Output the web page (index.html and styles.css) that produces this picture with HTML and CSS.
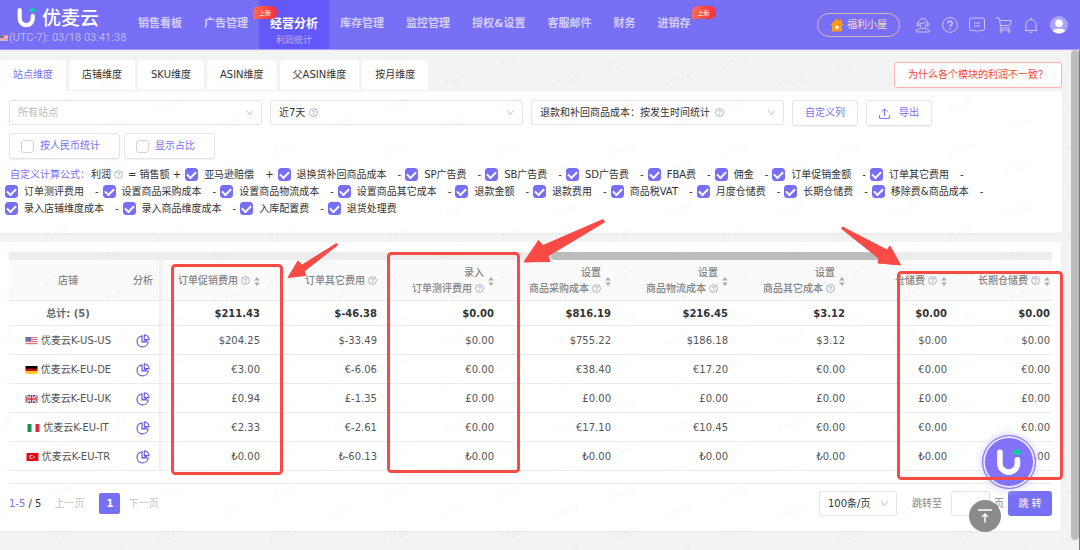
FILE: index.html
```html
<!DOCTYPE html>
<html lang="zh-CN">
<head>
  <meta charset="UTF-8">
  <title>利润统计 | 优麦云</title>
  <link rel="stylesheet" href="styles.css">
</head>
<body>
  <svg class="sprite" aria-hidden="true">
    <symbol id="help" viewBox="0 0 16 16"><circle cx="8" cy="8" r="7" fill="none" stroke="currentColor" stroke-width="1.3"/><path d="M5.8 6.4a2.2 2.2 0 1 1 3.3 1.9c-.8.5-1.1.8-1.1 1.6" fill="none" stroke="currentColor" stroke-width="1.4"/><circle cx="8" cy="11.8" r=".9" fill="currentColor"/></symbol>
    <symbol id="sort" viewBox="0 0 6 10"><path d="M3 0l3 4H0zM3 10l3-4H0z" fill="currentColor"/></symbol>
    <symbol id="down" viewBox="0 0 10 10"><path d="M1.5 2.5L5 7.5l3.500-5" fill="none" stroke="currentColor"/></symbol>
    <symbol id="pie" viewBox="0 0 14 14"><path d="M6 1.800A5.600 5.600 0 1 0 12.200 8H6z M8.300 5.700V.900a4.800 4.800 0 0 1 4.800 4.800z M6 8l5-1.500" fill="none" stroke="currentColor" stroke-width="1.2" stroke-linejoin="round"/></symbol>
    <symbol id="mark" viewBox="0 0 18 20"><path d="M2.500 3v8a6 6 0 0 0 12.500 0V8.500" fill="none" stroke="#fff" stroke-width="4" stroke-linecap="round"/><path d="M12 4.600a2 2 0 0 1 .6-3 2.600 2.600 0 0 1 4.200.6 1.500 1.500 0 0 1 .2 2.400z" fill="#0ccfa5"/></symbol>
    <symbol id="us" viewBox="0 0 12 8"><path fill="#f3dfe2" d="M0 0h12v8H0z"/><path stroke="#dd7883" d="M0 .5h12M0 2.500h12M0 4.500h12M0 6.500h12"/><path fill="#6d6da8" d="M0 0h5.500v4H0z"/></symbol>
    <symbol id="de" viewBox="0 0 12 8"><path d="M0 0h12v3H0z"/><path fill="#d80f0f" d="M0 2.700h12v2.700H0z"/><path fill="#ffce1a" d="M0 5.300h12V8H0z"/></symbol>
    <symbol id="uk" viewBox="0 0 12 8"><path fill="#3d4a94" d="M0 0h12v8H0z"/><path stroke="#fff" stroke-width="1.600" d="M0 0l12 8M12 0L0 8"/><path stroke="#d2303f" stroke-width=".6" d="M0 0l12 8M12 0L0 8"/><path stroke="#fff" stroke-width="2.600" d="M6 0v8M0 4h12"/><path stroke="#d2303f" stroke-width="1.500" d="M6 0v8M0 4h12"/></symbol>
    <symbol id="it" viewBox="0 0 12 8"><path fill="#fff" d="M0 0h12v8H0z"/><path fill="#1b9150" d="M0 0h4v8H0z"/><path fill="#d02b37" d="M8 0h4v8H8z"/></symbol>
    <symbol id="tr" viewBox="0 0 12 8"><path fill="#e30a17" d="M0 0h12v8H0z"/><circle cx="4.800" cy="4" r="2" fill="#fff"/><circle cx="5.400" cy="4" r="1.600" fill="#e30a17"/><circle cx="7.600" cy="4" r=".7" fill="#fff"/></symbol>
  </svg>

  <header class="header">
    <div class="brand">
      <div class="logo"><svg class="logo-mark"><use href="#mark"/></svg><span>优麦云</span></div>
      <div class="clock"><svg class="clock-flag"><use href="#us"/></svg>(UTC-7): 03/18 03:41:38</div>
    </div>
    <nav class="nav">
      <a href="#">销售看板</a>
      <a href="#">广告管理</a>
      <a href="#" class="active">经营分析<span class="badge badge-left">上新</span><small>利润统计</small></a>
      <a href="#">库存管理</a>
      <a href="#">监控管理</a>
      <a href="#">授权&amp;设置</a>
      <a href="#">客服邮件</a>
      <a href="#">财务</a>
      <a href="#">进销存<span class="badge badge-right">上新</span></a>
    </nav>
    <div class="tools">
      <button class="welfare"><svg width="14" height="14" viewBox="0 0 14 14"><path d="M7 .5L0 7h2v6.500h10V7h2l-2.200-2V1.500h-2V3.200z" fill="#ff9b12"/><path d="M5.500 8h3v3h-3z" fill="#fff"/></svg>福利小屋</button>
      <button class="tool" aria-label="客服"><svg viewBox="0 0 16 16"><path d="M3.500 9.500V6a4.500 4.500 0 0 1 9 0v3.500M3.500 5.500a1.500 1.500 0 0 0-1.500 1.500v.5A1.500 1.500 0 0 0 3.500 9M12.500 5.500A1.500 1.500 0 0 1 14 7v.5A1.500 1.500 0 0 1 12.500 9M5 6.500c2 0 4-.5 5-1.500.3 1 .7 1.500 1 1.500M5 7c0 3 1.500 4.500 3 4.500S11 10 11 7M6 11.500L1.500 13v2h13v-2L10 11.500"/></svg></button>
      <button class="tool" aria-label="帮助"><svg viewBox="0 0 16 16"><circle cx="8" cy="8" r="7.400"/><path d="M5.800 6.300a2.200 2.200 0 1 1 3.400 1.900c-.9.600-1.200.9-1.200 1.700M8 11v1.600" stroke-width="1.600"/></svg></button>
      <button class="tool" aria-label="消息"><svg viewBox="0 0 16 16"><path d="M2.500 1h11a2 2 0 0 1 2 2v8.500a2 2 0 0 1-2 2H10l-2 1.800-2-1.800H2.500a2 2 0 0 1-2-2V3a2 2 0 0 1 2-2zM5 6h6M5 9h6"/></svg></button>
      <button class="tool" aria-label="购物车"><svg viewBox="0 0 16 16"><path d="M0 1h3l2 10h9M3.500 3.500h11.800L14 8.500H4.500M5 11l-1 2h10"/><circle cx="5" cy="14.500" r="1"/><circle cx="13" cy="14.500" r="1"/></svg></button>
      <button class="tool" aria-label="通知"><svg viewBox="0 0 16 16"><path d="M1.500 13.500h13M3 13.500V7.500a5 5 0 0 1 10 0v6M8 2.500V.5M6.500 15.300h3"/></svg></button>
      <button class="avatar" aria-label="账户"><svg viewBox="0 0 18 18"><circle cx="9" cy="9" r="9" fill="#aaa5f8"/><circle cx="9" cy="7.300" r="3.800" fill="#fff"/><path d="M2.800 15c2-3.300 10.400-3.300 12.400 0A9 9 0 0 1 2.800 15z" fill="#fff"/></svg></button>
    </div>
  </header>

  <main class="page">
    <div class="tabbar">
      <nav class="tabs">
        <a href="#" class="current">站点维度</a>
        <a href="#">店铺维度</a>
        <a href="#">SKU维度</a>
        <a href="#">ASIN维度</a>
        <a href="#">父ASIN维度</a>
        <a href="#">按月维度</a>
      </nav>
      <button class="why">为什么各个模块的利润不一致？</button>
    </div>

    <section class="panel filters">
      <div class="row pickers">
        <div class="picker empty">
          <select aria-label="站点"><option>所有站点</option></select>
          <svg class="arrow"><use href="#down"/></svg>
        </div>
        <div class="picker">
          <select aria-label="时间"><option>近7天</option></select>
          <svg class="help help-days"><use href="#help"/></svg>
          <svg class="arrow"><use href="#down"/></svg>
        </div>
        <div class="picker">
          <select aria-label="统计方式"><option>退款和补回商品成本：按发生时间统计</option></select>
          <svg class="help help-cost"><use href="#help"/></svg>
          <svg class="arrow"><use href="#down"/></svg>
        </div>
        <button class="btn">自定义列</button>
        <button class="btn"><svg width="11" height="11" viewBox="0 0 11 11"><path d="M.6 7v3.400h9.800V7M5.500 8V1M2.800 3.600L5.500.9l2.700 2.700" fill="none" stroke="currentColor"/></svg>导出</button>
      </div>
      <div class="row toggles">
        <label class="btn"><input type="checkbox">按人民币统计</label>
        <label class="btn"><input type="checkbox">显示占比</label>
      </div>
      <div class="formula">
        <div class="line first">
          <a href="#">自定义计算公式：</a><span class="profit">利润<svg class="help"><use href="#help"/></svg>= 销售额 +</span>
          <label><input type="checkbox" checked>亚马逊赔偿</label><i>+</i>
          <label><input type="checkbox" checked>退换货补回商品成本</label><i>-</i>
          <label><input type="checkbox" checked>SP广告费</label><i>-</i>
          <label><input type="checkbox" checked>SB广告费</label><i>-</i>
          <label><input type="checkbox" checked>SD广告费</label><i>-</i>
          <label><input type="checkbox" checked>FBA费</label><i>-</i>
          <label><input type="checkbox" checked>佣金</label><i>-</i>
          <label><input type="checkbox" checked>订单促销金额</label><i>-</i>
          <label><input type="checkbox" checked>订单其它费用</label><i>-</i>
        </div>
        <div class="line">
          <label><input type="checkbox" checked>订单测评费用</label><i>-</i>
          <label><input type="checkbox" checked>设置商品采购成本</label><i>-</i>
          <label><input type="checkbox" checked>设置商品物流成本</label><i>-</i>
          <label><input type="checkbox" checked>设置商品其它成本</label><i>-</i>
          <label><input type="checkbox" checked>退款金额</label><i>-</i>
          <label><input type="checkbox" checked>退款费用</label><i>-</i>
          <label><input type="checkbox" checked>商品税VAT</label><i>-</i>
          <label><input type="checkbox" checked>月度仓储费</label><i>-</i>
          <label><input type="checkbox" checked>长期仓储费</label><i>-</i>
          <label><input type="checkbox" checked>移除费&amp;商品成本</label><i>-</i>
        </div>
        <div class="line">
          <label><input type="checkbox" checked>录入店铺维度成本</label><i>-</i>
          <label><input type="checkbox" checked>录入商品维度成本</label><i>-</i>
          <label><input type="checkbox" checked>入库配置费</label><i>-</i>
          <label><input type="checkbox" checked>退货处理费</label>
        </div>
      </div>
    </section>

    <section class="panel report">
      <div class="hscroll"><div class="hthumb"></div></div>
      <div class="table-wrap">
        <table>
          <colgroup>
            <col class="c-shop"><col class="c-chart"><col class="c-promo"><col class="c-cost"><col class="c-cost"><col class="c-cost"><col class="c-cost"><col class="c-cost"><col class="c-store"><col class="c-last">
          </colgroup>
          <thead>
            <tr>
              <th>店铺</th>
              <th class="fixed">分析</th>
              <th><div class="head"><span>订单促销费用<svg class="help"><use href="#help"/></svg></span><svg class="sort"><use href="#sort"/></svg></div></th>
              <th><div class="head"><span>订单其它费用<svg class="help"><use href="#help"/></svg></span></div></th>
              <th><div class="head"><span>录入<br>订单测评费用<svg class="help"><use href="#help"/></svg></span><svg class="sort"><use href="#sort"/></svg></div></th>
              <th><div class="head"><span>设置<br>商品采购成本<svg class="help"><use href="#help"/></svg></span><svg class="sort"><use href="#sort"/></svg></div></th>
              <th><div class="head"><span>设置<br>商品物流成本<svg class="help"><use href="#help"/></svg></span><svg class="sort"><use href="#sort"/></svg></div></th>
              <th><div class="head"><span>设置<br>商品其它成本<svg class="help"><use href="#help"/></svg></span><svg class="sort"><use href="#sort"/></svg></div></th>
              <th><div class="head"><span>仓储费<svg class="help"><use href="#help"/></svg></span><svg class="sort"><use href="#sort"/></svg></div></th>
              <th><div class="head"><span>长期仓储费<svg class="help"><use href="#help"/></svg></span><svg class="sort"><use href="#sort"/></svg></div></th>
            </tr>
          </thead>
          <tbody>
            <tr class="total">
              <td>总计: (5)</td><td class="fixed"></td>
              <td>$211.43</td><td>$-46.38</td><td>$0.00</td><td>$816.19</td><td>$216.45</td><td>$3.12</td><td>$0.00</td><td>$0.00</td>
            </tr>
            <tr>
              <td><svg class="flag"><use href="#us"/></svg>优麦云K-US-US</td><td class="fixed"><svg class="pie"><use href="#pie"/></svg></td>
              <td>$204.25</td><td>$-33.49</td><td>$0.00</td><td>$755.22</td><td>$186.18</td><td>$3.12</td><td>$0.00</td><td>$0.00</td>
            </tr>
            <tr>
              <td><svg class="flag"><use href="#de"/></svg>优麦云K-EU-DE</td><td class="fixed"><svg class="pie"><use href="#pie"/></svg></td>
              <td>€3.00</td><td>€-6.06</td><td>€0.00</td><td>€38.40</td><td>€17.20</td><td>€0.00</td><td>€0.00</td><td>€0.00</td>
            </tr>
            <tr>
              <td><svg class="flag"><use href="#uk"/></svg>优麦云K-EU-UK</td><td class="fixed"><svg class="pie"><use href="#pie"/></svg></td>
              <td>£0.94</td><td>£-1.35</td><td>£0.00</td><td>£0.00</td><td>£0.00</td><td>£0.00</td><td>£0.00</td><td>£0.00</td>
            </tr>
            <tr>
              <td><svg class="flag"><use href="#it"/></svg>优麦云K-EU-IT</td><td class="fixed"><svg class="pie"><use href="#pie"/></svg></td>
              <td>€2.33</td><td>€-2.61</td><td>€0.00</td><td>€17.10</td><td>€10.45</td><td>€0.00</td><td>€0.00</td><td>€0.00</td>
            </tr>
            <tr>
              <td><svg class="flag"><use href="#tr"/></svg>优麦云K-EU-TR</td><td class="fixed"><svg class="pie"><use href="#pie"/></svg></td>
              <td>₺0.00</td><td>₺-60.13</td><td>₺0.00</td><td>₺0.00</td><td>₺0.00</td><td>₺0.00</td><td>₺0.00</td><td>₺0.00</td>
            </tr>
          </tbody>
        </table>
      </div>
      <footer class="pager">
        <span class="range"><b>1-5</b> / 5</span>
        <button class="step">上一页</button>
        <button class="num">1</button>
        <button class="step">下一页</button>
        <div class="picker size">
          <select aria-label="每页条数"><option>100条/页</option></select>
          <svg class="arrow"><use href="#down"/></svg>
        </div>
        <label class="jump" for="jump">跳转至</label>
        <input class="jump-input" id="jump" type="text">
        <span class="jump-unit">页</span>
        <button class="go">跳 转</button>
      </footer>
    </section>
  </main>

  <svg class="watermark" aria-hidden="true">
    <defs>
      <pattern id="wm" width="113" height="43" patternUnits="userSpaceOnUse">
        <text x="42" y="24" transform="rotate(-20 54 20)">17185</text>
        <text x="-14" y="42" transform="rotate(-20 0 38)">17185</text>
        <text x="99" y="42" transform="rotate(-20 113 38)">17185</text>
      </pattern>
    </defs>
    <rect y="60" width="100%" height="100%" fill="url(#wm)"/>
  </svg>

  <div class="vscroll"><div class="vthumb"></div></div>
  <button class="assistant" aria-label="助手"><svg width="26" height="28"><use href="#mark"/></svg></button>
  <button class="to-top" aria-label="回到顶部"><svg width="14" height="14" viewBox="0 0 14 14"><path d="M0 1h14M7 13.500V5M4 8l3-3 3 3" fill="none" stroke="#fff" stroke-width="1.500"/></svg></button>

  <svg class="notes" width="1080" height="550" aria-hidden="true">
    <g fill="none" stroke="#f94a46" stroke-width="3">
      <rect x="172.500" y="265.500" width="109" height="208" rx="3"/>
      <rect x="388.500" y="253.500" width="130" height="218" rx="3"/>
      <rect x="898.500" y="272.500" width="163" height="206" rx="3"/>
    </g>
    <g fill="#f94a46" stroke="#f94a46" stroke-linejoin="round">
      <path d="M288 277.500L298 261l4 4 34.500-21.500 1 1.500L304.500 271l1 4.500z"/>
      <path d="M524 262l14.500-21.500 4.500 5 60-26 1.500 2.500L548 256l2 5.500z"/>
      <path d="M842.500 227l44.500 23 3-4 10.500 19-22.500-2 1-4.500-37.500-30z"/>
    </g>
  </svg>
</body>
</html>
```
FILE: styles.css
```css
* {
  box-sizing: border-box;
}
body {
  margin: 0;
  min-height: 100vh;
  overflow: hidden;
  background: #f3f3f3;
  color: #333;
  font: 10px/16px "DejaVu Sans", "Noto Sans CJK SC", sans-serif;
}
a {
  color: inherit;
  text-decoration: none;
}
button, select, input {
  font: inherit;
  color: inherit;
  margin: 0;
}
button {
  padding: 0;
  border: none;
  background: none;
  cursor: pointer;
  white-space: nowrap;
}
svg {
  flex: none;
}
.sprite {
  position: absolute;
  width: 0;
  height: 0;
}

/* header */
.header {
  display: flex;
  height: 50px;
  background: #776ff6;
  border-bottom: 1px solid #a29cf8;
  color: #d2cffd;
}
.brand {
  width: 127px;
  padding-top: 5px;
}
.logo {
  display: flex;
  align-items: center;
  gap: 6px;
  height: 25px;
  padding-left: 17px;
  color: #fff;
  font-size: 19px;
  font-weight: 500;
}
.logo-mark {
  width: 19px;
  height: 21px;
}
.clock {
  display: flex;
  align-items: center;
  gap: 1px;
  font: 11px/16px Roboto, sans-serif;
  color: #bdb8fb;
  white-space: nowrap;
}
.clock-flag {
  width: 8px;
  height: 8px;
}
.nav {
  display: flex;
  flex: 1;
  font-size: 11px;
  font-weight: bold;
}
.nav a {
  position: relative;
  padding: 16px 11px 0;
  white-space: nowrap;
}
.nav .active {
  background: #6458f8;
  color: #fff;
  font-size: 12px;
  text-align: center;
}
.nav small {
  display: block;
  color: #b9b4fc;
  font-size: 9px;
  font-weight: normal;
}
.badge {
  position: absolute;
  top: 6px;
  padding: 0 6px;
  border-radius: 6px 6px 6px 0;
  background: linear-gradient(90deg, #ff6b55, #ff2c3c);
  color: #fff;
  font-size: 6px;
  font-weight: normal;
  line-height: 13px;
}
.badge-left {
  left: -6px;
}
.badge-right {
  right: -14px;
}
.tools {
  display: flex;
  align-items: center;
  gap: 11px;
  padding-right: 12px;
}
.welfare {
  display: flex;
  align-items: center;
  justify-content: center;
  gap: 3px;
  width: 83px;
  height: 24px;
  margin-right: 4px;
  border: 1px solid #d8b7bd;
  border-radius: 12px;
  color: #fbdcc0;
}
.tool svg {
  display: block;
  width: 16px;
  height: 16px;
  fill: none;
  stroke: #c9c5fc;
}
.avatar svg {
  display: block;
  width: 18px;
  height: 18px;
}

/* tabs */
.page {
  padding: 10px 18px 0 0;
}
.tabbar {
  display: flex;
  justify-content: space-between;
  height: 31px;
}
.tabs {
  display: flex;
  gap: 3px;
}
.tabs a {
  height: 30px;
  padding: 0 13px;
  border-radius: 3px 3px 0 0;
  background: #fff;
  line-height: 30px;
}
.tabs .current {
  height: 31px;
  color: #776ff6;
}
.why {
  height: 26px;
  margin-top: 2px;
  padding: 0 13px;
  border: 1px solid #fbb5ae;
  border-radius: 3px;
  background: #fff;
  color: #f5483b;
}

/* filters */
.panel {
  background: #fff;
  border-radius: 0 3px 3px 0;
  box-shadow: 0 1px 2px #e8e8e8;
}
.filters {
  height: 142px;
  padding: 9px 9px 0;
}
.row {
  display: flex;
  gap: 8px;
}
.pickers {
  padding-right: 121px;
}
.picker {
  position: relative;
  flex: 1;
}
.picker select {
  display: block;
  width: 100%;
  height: 25px;
  padding: 0 8px;
  border: 1px solid #e4e4e4;
  border-radius: 3px;
  background: transparent;
  appearance: none;
}
.picker.empty select {
  color: #bbb;
}
.arrow {
  position: absolute;
  top: 8px;
  right: 8px;
  width: 9px;
  height: 9px;
  color: #bbb;
}
.help {
  width: 9px;
  height: 9px;
  color: #9a9db5;
}
.picker .help {
  position: absolute;
  top: 8px;
}
.help-days {
  left: 39px;
}
.help-cost {
  left: 184px;
}
.btn {
  display: flex;
  align-items: center;
  justify-content: center;
  gap: 9px;
  min-width: 66px;
  height: 26px;
  padding: 0 12px;
  border: 1px solid #e4e4e4;
  border-radius: 3px;
  box-shadow: 0 1px 1px #f2f2f2;
  color: #776ff6;
}
.toggles {
  gap: 4px;
  margin-top: 7px;
}
.toggles .btn {
  gap: 6px;
  padding: 0 19px 0 11px;
}
input[type="checkbox"] {
  flex: none;
  width: 13px;
  height: 13px;
  border: 1px solid #d4d4d4;
  border-radius: 3px;
  background: #fff;
  appearance: none;
}
input[type="checkbox"]:checked {
  display: grid;
  place-items: center;
  border-color: #776ff6;
  background: #776ff6;
}
input[type="checkbox"]:checked::after {
  content: "";
  width: 7px;
  height: 4px;
  margin-bottom: 2px;
  border: solid #fff;
  border-width: 0 0 2px 2px;
  transform: rotate(-45deg);
}
.formula {
  margin: 7px -4px 0;
}
.line {
  display: flex;
  height: 17px;
  align-items: center;
  white-space: nowrap;
}
.line.first {
  padding-left: 5px;
}
.line a {
  margin-right: 1px;
  color: #776ff6;
}
.line label {
  display: flex;
  align-items: center;
  gap: 6px;
}
.line i {
  margin: 0 4px 0 11px;
  font-style: normal;
}
.profit {
  display: flex;
  align-items: center;
  margin-right: 4px;
}
.profit .help {
  margin: 0 5px 0 3px;
}

/* report */
.report {
  height: 289px;
  margin: 9px 1px 0 0;
  padding: 10px 9px 0;
}
.hscroll {
  height: 8px;
  background: #ededed;
}
.hthumb {
  width: 32%;
  height: 8px;
  margin-left: 52%;
  border-radius: 4px;
  background: #bdbdbd;
}
.table-wrap {
  overflow: hidden;
  padding-bottom: 12px;
  border-bottom: 1px solid #ececec;
}
table {
  width: 100%;
  table-layout: fixed;
  border-collapse: separate;
  border-spacing: 0;
}
.c-shop {
  width: 118px;
}
.c-chart {
  width: 32px;
}
.c-promo {
  width: 109px;
}
.c-cost {
  width: 117px;
}
.c-store {
  width: 102px;
}
.c-last {
  width: 97px;
}
th {
  height: 41px;
  padding: 2px 8px 0 0;
  background: #fafafa;
  border-bottom: 1px solid #ececec;
  color: #858585;
  font-weight: 500;
  white-space: nowrap;
}
td {
  height: 29px;
  padding: 2px 8px 0 0;
  border-bottom: 1px solid #ececec;
  color: #555;
  text-align: right;
  white-space: nowrap;
}
th:first-child, td:first-child, th.fixed, td.fixed {
  padding: 2px 0 0;
  text-align: center;
}
th:last-child, td:last-child {
  padding-right: 2px;
}
.fixed + th, .fixed + td {
  background-image: linear-gradient(90deg, #eee, transparent 5px);
}
.total td {
  height: 25px;
  color: #333;
  font-weight: bold;
}
.total td:first-child {
  color: #666;
}
.head {
  display: flex;
  align-items: center;
  justify-content: flex-end;
  gap: 4px;
  text-align: right;
}
.head .help {
  margin-left: 3px;
  vertical-align: -1px;
}
.sort {
  width: 6px;
  height: 9px;
  color: #aaa;
}
.flag {
  width: 13px;
  height: 8px;
  margin-right: 3px;
  vertical-align: -1px;
}
.pie {
  display: block;
  width: 14px;
  height: 14px;
  margin: 0 auto;
  color: #675ce0;
}

/* pager */
.pager {
  display: flex;
  align-items: center;
  padding-top: 7px;
}
.range b {
  color: #776ff6;
  font-weight: normal;
}
.step {
  margin-left: 13px;
  color: #c4c4c4;
}
.num {
  width: 21px;
  height: 21px;
  margin-left: 15px;
  border-radius: 2px;
  background: #776ff6;
  color: #fff;
  font-weight: bold;
}
.num + .step {
  margin-left: 8px;
}
.size {
  flex: 0 0 78px;
  margin-left: auto;
}
.jump {
  margin-left: 15px;
  color: #888;
}
.jump-input {
  width: 39px;
  height: 25px;
  margin: 0 4px 0 9px;
  border: 1px solid #e4e4e4;
  border-radius: 3px;
}
.jump-unit {
  color: #888;
}
.go {
  width: 44px;
  height: 25px;
  margin-left: 4px;
  border-radius: 3px;
  background: #776ff6;
  color: #fff;
}

/* overlays */
.watermark {
  position: absolute;
  inset: 0;
  width: 100%;
  height: 100%;
  fill: #000;
  fill-opacity: 0.15;
  font-size: 9px;
  pointer-events: none;
}
.vscroll {
  position: absolute;
  top: 50px;
  right: 0;
  bottom: 0;
  width: 9px;
  border-right: 1px solid #777;
}
.vthumb {
  height: 98%;
  border-radius: 4px;
  background: #bdbdbd;
}
.assistant {
  position: absolute;
  right: 44px;
  bottom: 61px;
  display: grid;
  place-items: center;
  width: 54px;
  height: 54px;
  border: 1px solid #8577fb;
  border-radius: 50%;
  background: #8373fb;
  box-shadow: inset 0 0 0 2px #e8e5ff, 0 0 8px #cfc9ff;
}
.to-top {
  position: absolute;
  right: 79px;
  bottom: 18px;
  display: grid;
  place-items: center;
  width: 32px;
  height: 32px;
  border-radius: 50%;
  background: rgba(110, 110, 110, 0.8);
}
.notes {
  position: absolute;
  top: 0;
  left: 0;
  pointer-events: none;
}
```
